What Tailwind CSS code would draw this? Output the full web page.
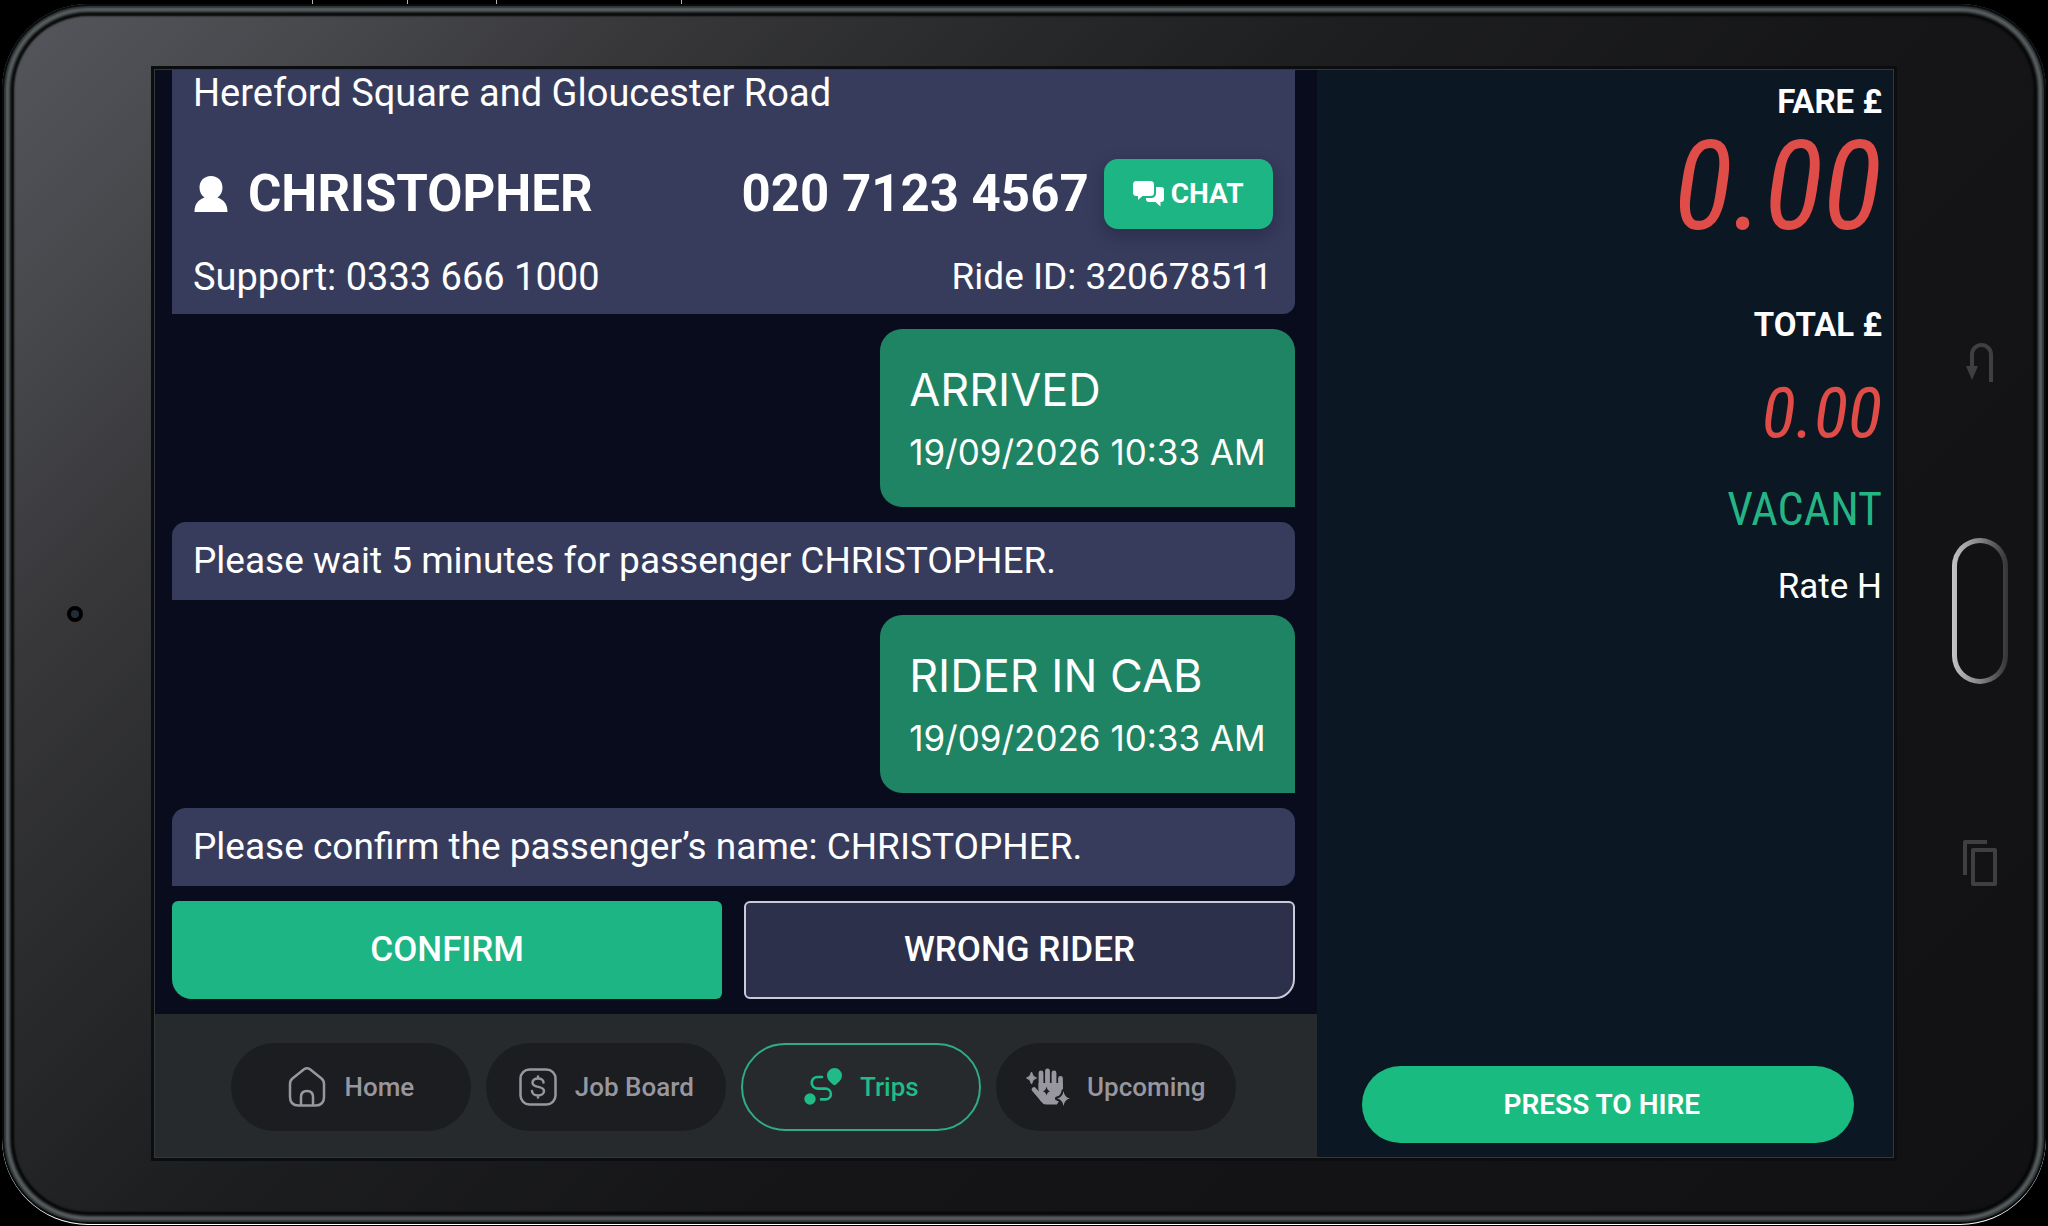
<!DOCTYPE html>
<html lang="en">
<head>
<meta charset="utf-8">
<meta name="viewport" content="width=device-width, initial-scale=1">
<title>Driver terminal</title>
<script src="https://cdn.jsdelivr.net/npm/@tailwindcss/browser@4"></script>
</head>
<body class="flex min-h-screen flex-col bg-black px-0.5 pb-px font-['Roboto',sans-serif] text-white">
<!-- top edge keys -->
<div class="flex h-1 shrink-0 items-end pl-[310px]" aria-hidden="true">
  <div class="h-1 w-24 border-x border-white/70 bg-black"></div>
  <div class="ml-[88px] h-1 w-[186px] border-x border-white/70 bg-black"></div>
</div>
<!-- tablet body -->
<div class="flex grow rounded-[86px] border-b border-white bg-[linear-gradient(135deg,#55575c_0%,#48494d_10%,#38383b_20%,#28292a_32%,#1d1e1f_42%,#151517_60%,#111113_100%)] px-3 pt-[66px] pb-[67px] shadow-[inset_0_0_0_2px_#0a0c0c,inset_0_0_2px_4px_#2c3133,inset_0_0_3px_8px_#5c6365,inset_0_0_2px_12px_#050606]">
  <aside class="flex w-[141px] shrink-0 items-center justify-center" aria-label="Camera">
    <div class="mr-5 size-4 rounded-full border-4 border-black bg-[#222c38]"></div>
  </aside>

  <main class="grid grow grid-cols-[1163fr_577fr] overflow-hidden shadow-[0_0_0_1px_#33383b,0_0_0_4px_#0b0d0e]">
    <section class="flex flex-col bg-[#090c1d]">
      <div class="flex grow flex-col gap-[15px] pr-[22px] pb-[15px] pl-[17px]">
        <article class="rounded-br-xl bg-[#373c5c] pr-[22px] pb-[14px] pl-[21px] text-[38px] leading-[46px]">
          <p>Hereford Square and Gloucester Road</p>
          <div class="mt-[43px] flex items-center justify-between text-[51px] leading-[60px] font-bold">
            <h1 class="flex items-center gap-[19px]">
              <svg class="size-9" viewBox="0 0 36 36" fill="currentColor" aria-hidden="true"><path d="M18 0C11 0 6.500 5 6.500 11.500c0 4.500 2 8 5 10C5 24 1.500 28 1.500 36h33c0-8-3.500-12-10-14.500 3-2 5-5.500 5-10C29.500 5 25 0 18 0z"/></svg>
              CHRISTOPHER
            </h1>
            <div class="flex items-center gap-[15px]">
              <span>020 7123 4567</span>
              <button class="flex h-[70px] w-[169px] items-center justify-center gap-[6px] rounded-[14px] bg-[#1eb584] text-[28px] shadow-[0_6px_16px_rgba(20,15,45,0.35)]">
                <svg class="h-[26px] w-8" viewBox="0 0 32 26" fill="currentColor" aria-hidden="true"><path d="M3.500 0h14A3.500 3.500 0 0 1 21 3.500v8a3.500 3.500 0 0 1-3.500 3.500H9.500L5 19v-4H3.500A3.500 3.500 0 0 1 0 11.500v-8A3.500 3.500 0 0 1 3.500 0z"/><path d="M23 6h5a3 3 0 0 1 3 3v9a3 3 0 0 1-3 3h-.5v4.500L22.500 21H16a3 3 0 0 1-3-3v-1h5.500a4.500 4.500 0 0 0 4.500-4.500z"/></svg>
                CHAT
              </button>
            </div>
          </div>
          <div class="mt-[25px] flex justify-between">
            <span>Support: 0333 666 1000</span>
            <span class="text-[37px]">Ride ID: 320678511</span>
          </div>
        </article>

        <article class="self-end rounded-[22px] rounded-br-none bg-[#1f8463] px-[29px] py-[34px] font-['Inter',sans-serif]">
          <h2 class="text-[45px] leading-[54px]">ARRIVED</h2>
          <p class="mt-[14px] text-[35px] leading-[42px]">19/09/2026 10:33 AM</p>
        </article>

        <p class="rounded-[14px] rounded-bl-none bg-[#373c5c] px-[21px] py-4 text-[37px] leading-[46px]">Please wait 5 minutes for passenger CHRISTOPHER.</p>

        <article class="self-end rounded-[22px] rounded-br-none bg-[#1f8463] px-[29px] py-[34px] font-['Inter',sans-serif]">
          <h2 class="text-[45px] leading-[54px]">RIDER IN CAB</h2>
          <p class="mt-[14px] text-[35px] leading-[42px]">19/09/2026 10:33 AM</p>
        </article>

        <p class="rounded-[14px] rounded-bl-none bg-[#373c5c] px-[21px] py-4 text-[37px] leading-[46px]">Please confirm the passenger’s name: CHRISTOPHER.</p>

        <div class="grid grid-cols-2 gap-[22px] text-[35px] font-medium">
          <button class="h-[98px] rounded-md rounded-bl-[20px] bg-[#1eb584]">CONFIRM</button>
          <button class="h-[98px] rounded-md rounded-br-[20px] border-2 border-[#c9cbd8] bg-[#2c304a]">WRONG RIDER</button>
        </div>
      </div>

      <nav class="flex h-[143px] shrink-0 justify-center gap-[15px] bg-[#262a2d] pt-[29px] pr-[5px] text-[26px] font-medium text-[#98979f]" aria-label="Main">
        <a href="#home" class="flex h-[88px] w-60 items-center justify-center gap-[17px] rounded-full bg-[#1c1d20]">
          <svg class="size-10" viewBox="0 0 40 40" fill="none" stroke="currentColor" stroke-width="2.500" stroke-linejoin="round" aria-hidden="true"><path d="M17 2.300L5.500 11.500Q3 13.500 3 17v13q0 8.500 8.500 8.500h17Q37 38.500 37 30V17q0-3.500-2.500-5.500L23 2.300q-3-2-6 0z"/><path d="M14 38V30q0-6 6-6t6 6v8"/></svg>
          Home
        </a>
        <a href="#jobs" class="flex h-[88px] w-60 items-center justify-center gap-[17px] rounded-full bg-[#1c1d20]">
          <svg class="size-10" viewBox="0 0 40 40" fill="none" stroke="currentColor" stroke-width="2.500" stroke-linecap="round" aria-hidden="true"><rect x="2.500" y="2.500" width="35" height="35" rx="9"/><path d="M25.500 15.500c0-2.500-2.500-4-5.500-4s-5.500 1.500-5.500 4.200c0 5.800 11.500 2.600 11.500 8.300 0 2.800-2.700 4.500-6 4.500s-6-1.700-6-4.500M20 9.500v2M20 28.500v2"/></svg>
          Job Board
        </a>
        <a href="#trips" aria-current="page" class="flex h-[88px] w-60 items-center justify-center gap-[17px] rounded-full border-2 border-[#2fac85] text-[#20bb87]">
          <svg class="size-10" viewBox="0 0 40 40" fill="currentColor" aria-hidden="true"><circle cx="7" cy="32" r="5.700"/><path d="M31.500 1a7.500 7.500 0 0 1 7.500 7.500c0 4.500-4 7-6 9q-1.500 1.500-3 0c-2-2-6-4.500-6-9A7.500 7.500 0 0 1 31.500 1z"/><path d="M19 10h-4.500a5.800 5.800 0 0 0 0 11.600h8a5.400 5.400 0 0 1 0 10.800H18" fill="none" stroke="currentColor" stroke-width="2.600" stroke-linecap="round"/></svg>
          Trips
        </a>
        <a href="#upcoming" class="flex h-[88px] w-60 items-center justify-center gap-[17px] rounded-full bg-[#1c1d20]">
          <svg class="h-10 w-11" viewBox="0 0 44 40" fill="currentColor" aria-hidden="true"><g fill="none" stroke="currentColor" stroke-width="4.800" stroke-linecap="round"><path d="M15 6v16M21.500 4v18M28 6v16M34.500 11.500V22M8 22.500l8 9"/></g><path d="M12.600 16h24.300v9q0 4-2 6l-4 6.500H20q-3 0-5-3L8 25l4.600-1z"/><path d="M5.500 5q.8 5 5 6-4.200 1-5 6-.8-5-5-6 4.200-1 5-6z" stroke="currentColor" stroke-linejoin="round"/><path d="M20.500 19.500q.7 4 3.700 4.700-3 .7-3.700 4.300-.7-3.600-3.700-4.300 3-.7 3.700-4.700z" fill="#1c1d20"/><path d="M37.500 24q1 6.500 6.500 7.500-5.500 1-6.500 7.500-1-6.500-6.500-7.500 5.500-1 6.500-7.500z" stroke="#1c1d20" stroke-width="4" stroke-linejoin="round" paint-order="stroke"/></svg>
          Upcoming
        </a>
      </nav>
    </section>

    <section class="flex flex-col items-end bg-[#0b1722] pt-3 pr-[11px] pb-[14px]" aria-label="Meter">
      <h2 class="text-[33px] leading-10 font-bold">FARE £</h2>
      <p class="mt-[17px] font-['Roboto_Condensed',sans-serif] text-[123px] leading-[96px] text-[#e04c48] italic">0.00</p>
      <h2 class="mt-[70px] text-[33px] leading-10 font-bold">TOTAL £</h2>
      <p class="mt-[38px] font-['Roboto_Condensed',sans-serif] text-[71px] leading-[60px] text-[#e04c48] italic">0.00</p>
      <p class="mt-[41px] font-['Roboto_Condensed',sans-serif] text-[46px] leading-[50px] text-[#25b585]">VACANT</p>
      <p class="mt-[33px] text-[35px] leading-10">Rate H</p>
      <div class="mt-auto w-full pr-7 pl-[45px]">
        <button class="h-[77px] w-full rounded-full bg-[#1abb80] pr-3 text-[28px] font-semibold">PRESS TO HIRE</button>
      </div>
    </section>
  </main>

  <!-- hardware keys -->
  <aside class="flex w-[141px] shrink-0 flex-col items-center justify-center gap-[156px] pl-8 text-[#3f3f41]" aria-label="Tablet keys">
    <button aria-label="Back"><svg class="block h-10 w-7" viewBox="0 0 28 40" fill="none" stroke="currentColor" stroke-width="4" aria-hidden="true"><path d="M6 26V12.500a9.500 9.500 0 0 1 19 0V40"/><path d="M0 24h12L6 38z" fill="currentColor" stroke="none"/></svg></button>
    <button aria-label="Home key" class="h-[146px] w-14 rounded-full bg-linear-to-r from-[#c4c4c5] via-[#858587] to-[#333335] p-[5px]"><span class="block h-full w-full rounded-full bg-[#121214]"></span></button>
    <button aria-label="Recent apps"><svg class="block h-[46px] w-[34px]" viewBox="0 0 34 46" fill="none" stroke="currentColor" stroke-width="4" stroke-linejoin="round" aria-hidden="true"><path d="M24 2H2v33"/><rect x="10" y="10" width="22" height="34"/></svg></button>
  </aside>
</div>
</body>
</html>
